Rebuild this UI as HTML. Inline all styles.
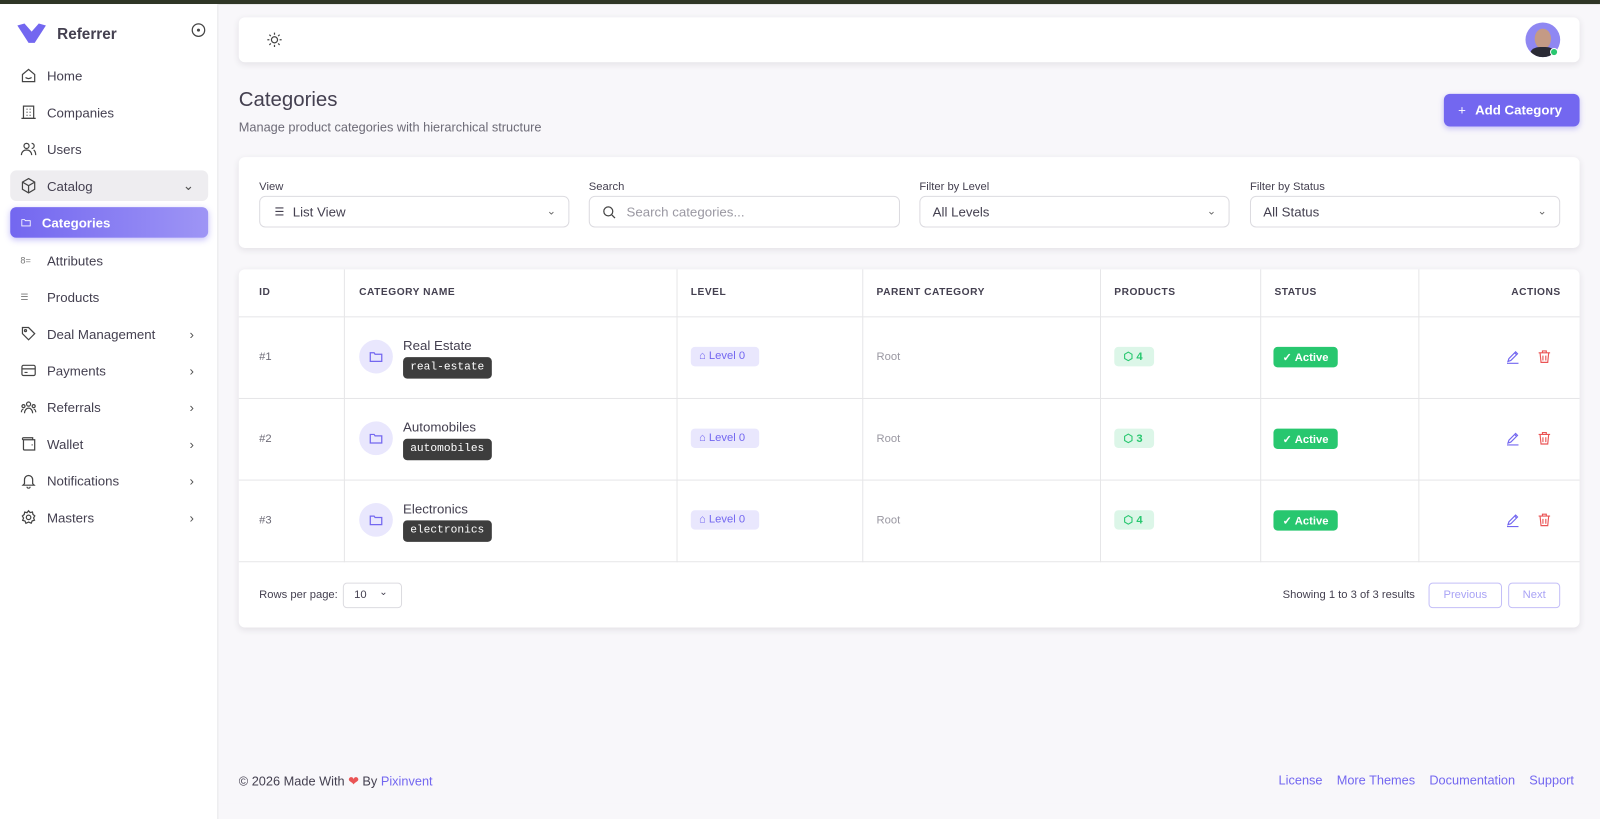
<!DOCTYPE html>
<html><head><meta charset="utf-8"><style>
*{box-sizing:border-box;margin:0;padding:0}
html,body{width:1600px;height:803px;overflow:hidden;background:#f8f7fa}
#w{position:absolute;left:0;top:0;width:1568px;height:787px;transform:scale(1.0204);transform-origin:0 0;font-family:"Liberation Sans",sans-serif;color:#444050;background:#f8f7fa}
.topbar{position:absolute;left:0;top:0;width:1568px;height:4px;background:#2f3626}
.side{position:absolute;left:0;top:4px;width:214px;height:799px;background:#fff;border-right:1px solid #e6e6e8}
.logo{position:absolute;left:16px;top:18px;display:flex;align-items:center;gap:10px;font-weight:bold;font-size:15px;color:#444050}
.nav{position:absolute;left:10px;width:194px;height:30px;display:flex;align-items:center;padding-left:10px;font-size:13px;color:#444050;gap:10px;border-radius:6px}
.nav svg{width:16px;height:16px;flex:none}
.nav .chev{position:absolute;right:14px;font-size:13px;color:#555}
.act{background:linear-gradient(90deg,#7367f0,#9e95f5);color:#fff;font-weight:bold;box-shadow:0 2px 6px rgba(115,103,240,.4)}
.card{position:absolute;background:#fff;border-radius:6px;box-shadow:0 2px 6px rgba(47,43,61,.1)}
.lbl{position:absolute;font-size:11px;color:#444050}
.inp{position:absolute;height:31px;border:1px solid #dcdbe0;border-radius:6px;font-size:13px;color:#444050;display:flex;align-items:center;padding-left:12px}
.inp .dn{position:absolute;right:12px;top:7px;font-size:11px;color:#666}
.vl{position:absolute;top:264px;width:1px;height:287px;background:#e6e6e8}
.hl{position:absolute;left:234px;width:1314px;height:1px;background:#e6e6e8}
.id{position:absolute;left:254px;font-size:11px;color:#6d6b77}
.fold{position:absolute;left:352px;width:33px;height:33px;border-radius:50%;background:#e9e7fd}
.nm{position:absolute;left:395px;font-size:13px;color:#444050}
.slug{position:absolute;left:395px;height:21px;background:#3d3d3d;color:#fff;border-radius:4px;font-family:"Liberation Mono",monospace;font-size:11px;padding:4px 7px}
.lv{position:absolute;left:677px;height:19px;width:67px;background:#e9e7fd;color:#7367f0;border-radius:4px;font-size:11px;padding:3px 0 0 8px}
.root{position:absolute;left:859px;font-size:11px;color:#9a98a2}
.pr{position:absolute;left:1092px;width:39px;height:19px;background:#dcf6e8;color:#28c76f;border-radius:4px;font-size:11px;font-weight:bold;padding:3px 0 0 9px}
.ac{position:absolute;left:1248px;width:63px;height:20px;background:#28c76f;color:#fff;border-radius:4px;font-size:11px;font-weight:bold;padding:4px 0 0 9px}
.ic{position:absolute;width:15px;height:15px}
.foot{position:absolute;top:758px;font-size:12.5px}
</style></head><body><div id="w">
<div class="topbar"></div>
<div class="side">
<div class="logo"><svg width="30" height="22" viewBox="0 0 30 22"><path d="M1 3 L8 1 L15 9 L22 1 L29 3 L18 20 L12 20 Z" fill="#7367f0"/></svg>Referrer</div>
<svg style="position:absolute;left:187px;top:18px" width="15" height="15" viewBox="0 0 16 16"><circle cx="8" cy="8" r="6.5" fill="none" stroke="#444" stroke-width="1.3"/><circle cx="8" cy="8" r="1.6" fill="#444"/></svg>
</div>
<div class="nav" style="top:59px"><svg viewBox="0 0 16 16" fill="none" stroke="#444" stroke-width="1.2"><path d="M2 7l6-5 6 5v7H2z"/><path d="M5 10q3 2 6 0"/></svg>Home</div>
<div class="nav" style="top:95px"><svg viewBox="0 0 16 16" fill="none" stroke="#444" stroke-width="1.2"><rect x="3" y="2" width="10" height="12"/><path d="M1 14h14M6 5h1M9 5h1M6 8h1M9 8h1M6 11h1M9 11h1"/></svg>Companies</div>
<div class="nav" style="top:131px"><svg viewBox="0 0 16 16" fill="none" stroke="#444" stroke-width="1.2"><circle cx="6" cy="5" r="2.5"/><path d="M1 14c0-3 2-5 5-5s5 2 5 5M11 2.5a2.5 2.5 0 010 5M13 9c1.5 1 2 3 2 5"/></svg>Users</div>
<div class="nav" style="top:167px;background:#eeedf0"><svg viewBox="0 0 16 16" fill="none" stroke="#444" stroke-width="1.2"><path d="M8 1l6 3.5v7L8 15l-6-3.5v-7zM2 4.5L8 8l6-3.5M8 8v7"/></svg>Catalog<span class="chev">⌄</span></div>
<div class="nav act" style="top:203px"><svg viewBox="0 0 16 16" fill="none" stroke="#fff" stroke-width="1.2" style="width:11px"><path d="M2 4h4l1 1.5h7V13H2z"/></svg>Categories</div>
<div class="nav" style="top:240px"><span style="font-size:9px;color:#777;width:16px">8=</span>Attributes</div>
<div class="nav" style="top:276px"><span style="font-size:9px;color:#777;width:16px">☰</span>Products</div>
<div class="nav" style="top:312px"><svg viewBox="0 0 16 16" fill="none" stroke="#444" stroke-width="1.2"><path d="M2 2h6l6 6-6 6-6-6z"/><circle cx="5" cy="5" r="1"/></svg>Deal Management<span class="chev">›</span></div>
<div class="nav" style="top:348px"><svg viewBox="0 0 16 16" fill="none" stroke="#444" stroke-width="1.2"><rect x="1.5" y="3" width="13" height="10" rx="1.5"/><path d="M1.5 6.5h13M4 10h3"/></svg>Payments<span class="chev">›</span></div>
<div class="nav" style="top:384px"><svg viewBox="0 0 16 16" fill="none" stroke="#444" stroke-width="1.2"><circle cx="8" cy="5" r="2"/><circle cx="3" cy="7" r="1.5"/><circle cx="13" cy="7" r="1.5"/><path d="M4 14c0-3 2-5 4-5s4 2 4 5M1 13c0-2 1-3 2-3M15 13c0-2-1-3-2-3"/></svg>Referrals<span class="chev">›</span></div>
<div class="nav" style="top:420px"><svg viewBox="0 0 16 16" fill="none" stroke="#444" stroke-width="1.2"><path d="M3 4h9v-2H3a1 1 0 000 2v9a1 1 0 001 1h10V4H3M11 9h1"/></svg>Wallet<span class="chev">›</span></div>
<div class="nav" style="top:456px"><svg viewBox="0 0 16 16" fill="none" stroke="#444" stroke-width="1.2"><path d="M4 11V7a4 4 0 018 0v4l1.5 1.5h-11zM6.5 14a1.5 1.5 0 003 0"/></svg>Notifications<span class="chev">›</span></div>
<div class="nav" style="top:492px"><svg viewBox="0 0 16 16" fill="none" stroke="#444" stroke-width="1.2"><circle cx="8" cy="8" r="2.2"/><path d="M8 1.5l1.5 1.8 2.3-.5.5 2.3 1.8 1.5-1.2 2 .9 2.2-2.3.7-.9 2.2L8 12.6l-2.6 1.2-.9-2.2-2.3-.7.9-2.2-1.2-2 1.8-1.5.5-2.3 2.3.5z"/></svg>Masters<span class="chev">›</span></div>

<div class="card" style="left:234px;top:17px;width:1314px;height:44px">
<svg style="position:absolute;left:27px;top:14px" width="16" height="16" viewBox="0 0 16 16" fill="none" stroke="#444" stroke-width="1.2"><circle cx="8" cy="8" r="3"/><path d="M8 1v2M8 13v2M1 8h2M13 8h2M3 3l1.4 1.4M11.6 11.6L13 13M3 13l1.4-1.4M11.6 4.4L13 3"/></svg>
<div style="position:absolute;left:1261px;top:5px;width:34px;height:34px;border-radius:50%;background:#8f87f2;overflow:hidden"><div style="position:absolute;left:9px;top:6px;width:16px;height:20px;border-radius:50%;background:#c49a85"></div><div style="position:absolute;left:5px;top:24px;width:24px;height:14px;border-radius:40%;background:#2b2b35"></div></div>
<div style="position:absolute;left:1285px;top:30px;width:8px;height:8px;border-radius:50%;background:#28c76f;border:1.5px solid #fff"></div>
</div>

<div style="position:absolute;left:234px;top:87px;font-size:20px;color:#444050">Categories</div>
<div style="position:absolute;left:234px;top:118px;font-size:12.5px;color:#6d6b77">Manage product categories with hierarchical structure</div>
<div style="position:absolute;left:1415px;top:92px;width:133px;height:32px;background:#7367f0;border-radius:6px;color:#fff;font-weight:bold;font-size:13px;padding:8px 0 0 14px;box-shadow:0 2px 5px rgba(115,103,240,.35)"><span style="font-weight:normal;margin-right:9px">+</span>Add Category</div>

<div class="card" style="left:234px;top:154px;width:1314px;height:89px"></div>
<div class="lbl" style="left:254px;top:177px">View</div>
<div class="inp" style="left:254px;top:192px;width:304px"><span style="font-size:11px;margin-right:8px;margin-left:2px">☰</span>List View<span class="dn">⌄</span></div>
<div class="lbl" style="left:577px;top:177px">Search</div>
<div class="inp" style="left:577px;top:192px;width:305px;color:#9a98a2"><svg width="14" height="14" viewBox="0 0 16 16" fill="none" stroke="#444" stroke-width="1.4" style="margin-right:10px"><circle cx="7" cy="7" r="5"/><path d="M11 11l3.5 3.5"/></svg>Search categories...</div>
<div class="lbl" style="left:901px;top:177px">Filter by Level</div>
<div class="inp" style="left:901px;top:192px;width:304px">All Levels<span class="dn">⌄</span></div>
<div class="lbl" style="left:1225px;top:177px">Filter by Status</div>
<div class="inp" style="left:1225px;top:192px;width:304px">All Status<span class="dn">⌄</span></div>

<div class="card" style="left:234px;top:264px;width:1314px;height:351px"></div>
<div class="hl" style="top:310px"></div><div class="hl" style="top:390px"></div><div class="hl" style="top:470px"></div><div class="hl" style="top:550px"></div>
<div class="vl" style="left:337px"></div><div class="vl" style="left:663px"></div><div class="vl" style="left:845px"></div><div class="vl" style="left:1078px"></div><div class="vl" style="left:1235px"></div><div class="vl" style="left:1390px"></div>
<div style="position:absolute;top:281px;left:0;font-size:10px;font-weight:bold;letter-spacing:.5px;color:#444050">
<span style="position:absolute;left:254px">ID</span><span style="position:absolute;left:352px;white-space:nowrap">CATEGORY NAME</span><span style="position:absolute;left:677px">LEVEL</span><span style="position:absolute;left:859px;white-space:nowrap">PARENT CATEGORY</span><span style="position:absolute;left:1092px">PRODUCTS</span><span style="position:absolute;left:1249px">STATUS</span><span style="position:absolute;left:1481px">ACTIONS</span></div>

<div class="id" style="top:344px">#1</div><div class="fold" style="top:333px"></div><div class="nm" style="top:331px">Real Estate</div><div class="slug" style="top:350px">real-estate</div><div class="lv" style="top:340px">⌂ Level 0</div><div class="root" style="top:344px">Root</div><div class="pr" style="top:340px">⬡ 4</div><div class="ac" style="top:340px">✓ Active</div>
<div class="id" style="top:424px">#2</div><div class="fold" style="top:413px"></div><div class="nm" style="top:411px">Automobiles</div><div class="slug" style="top:430px">automobiles</div><div class="lv" style="top:420px">⌂ Level 0</div><div class="root" style="top:424px">Root</div><div class="pr" style="top:420px">⬡ 3</div><div class="ac" style="top:420px">✓ Active</div>
<div class="id" style="top:504px">#3</div><div class="fold" style="top:493px"></div><div class="nm" style="top:491px">Electronics</div><div class="slug" style="top:510px">electronics</div><div class="lv" style="top:500px">⌂ Level 0</div><div class="root" style="top:504px">Root</div><div class="pr" style="top:500px">⬡ 4</div><div class="ac" style="top:500px">✓ Active</div>
<svg width="0" height="0" style="position:absolute"><defs>
<g id="fd"><path d="M2 4h4l1 1.5h7V13H2z" fill="none" stroke="#7367f0" stroke-width="1.3"/></g>
<g id="ed"><path d="M3 13l1-3 7-7 2 2-7 7zM2 15h12M10 4l2 2" fill="none" stroke="#7367f0" stroke-width="1.2"/></g>
<g id="tr"><path d="M2 4h12M6 4V2h4v2M3.5 4l1 10h7l1-10M6.5 7v5M9.5 7v5" fill="none" stroke="#ea5455" stroke-width="1.2"/></g></defs></svg>
<svg class="ic" style="left:361px;top:342px" viewBox="0 0 16 16"><use href="#fd"/></svg>
<svg class="ic" style="left:361px;top:422px" viewBox="0 0 16 16"><use href="#fd"/></svg>
<svg class="ic" style="left:361px;top:502px" viewBox="0 0 16 16"><use href="#fd"/></svg>
<svg class="ic" style="left:1475px;top:342px" viewBox="0 0 16 16"><use href="#ed"/></svg><svg class="ic" style="left:1506px;top:342px" viewBox="0 0 16 16"><use href="#tr"/></svg>
<svg class="ic" style="left:1475px;top:422px" viewBox="0 0 16 16"><use href="#ed"/></svg><svg class="ic" style="left:1506px;top:422px" viewBox="0 0 16 16"><use href="#tr"/></svg>
<svg class="ic" style="left:1475px;top:502px" viewBox="0 0 16 16"><use href="#ed"/></svg><svg class="ic" style="left:1506px;top:502px" viewBox="0 0 16 16"><use href="#tr"/></svg>

<div style="position:absolute;left:254px;top:577px;font-size:11px;color:#444050">Rows per page:</div>
<div style="position:absolute;left:336px;top:571px;width:58px;height:25px;border:1px solid #dcdbe0;border-radius:4px;font-size:11px;padding:5px 0 0 10px">10<span style="position:absolute;right:13px;top:3px;font-size:10px">⌄</span></div>
<div style="position:absolute;left:1257px;top:577px;font-size:11px;color:#444050">Showing 1 to 3 of 3 results</div>
<div style="position:absolute;left:1400px;top:571px;width:72px;height:25px;border:1px solid #c4bff8;border-radius:4px;font-size:11px;color:#a9a3f5;text-align:center;padding-top:5px">Previous</div>
<div style="position:absolute;left:1478px;top:571px;width:51px;height:25px;border:1px solid #c4bff8;border-radius:4px;font-size:11px;color:#a9a3f5;text-align:center;padding-top:5px">Next</div>

<div class="foot" style="left:234px;color:#444050">© 2026 Made With <span style="color:#ea5455">❤</span> By <span style="color:#7367f0">Pixinvent</span></div>
<div class="foot" style="left:1253px;color:#7367f0">License&nbsp;&nbsp;&nbsp; More Themes&nbsp;&nbsp;&nbsp; Documentation&nbsp;&nbsp;&nbsp; Support</div>
</div></body></html>
